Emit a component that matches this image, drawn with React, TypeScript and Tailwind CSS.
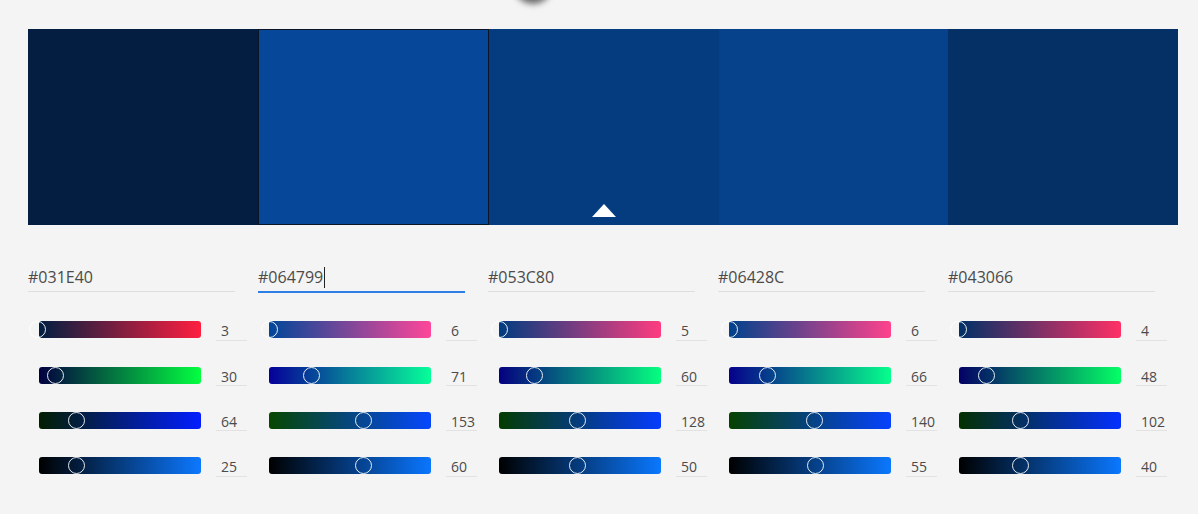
type Rgb = [number, number, number];

const swatches = ['#031E40', '#064799', '#053C80', '#06428C', '#043066'];

const hexToRgb = (hex: string): Rgb => {
  const n = parseInt(hex.slice(1), 16);
  return [(n >> 16) & 255, (n >> 8) & 255, n & 255];
};

const css = ([r, g, b]: Rgb) => `rgb(${Math.round(r)}, ${Math.round(g)}, ${Math.round(b)})`;

type SliderRow = {
  from: string;
  to: string;
  position: number; // 0..1
  label: number;
};

const buildRows = (hex: string): SliderRow[] => {
  const [r, g, b] = hexToRgb(hex);
  const max = Math.max(r, g, b);
  const scale = max ? 255 / max : 0;
  const brightness = Math.round((max / 255) * 100);

  return [
    { from: css([0, g, b]), to: css([255, g, b]), position: r / 255, label: r },
    { from: css([r, 0, b]), to: css([r, 255, b]), position: g / 255, label: g },
    { from: css([r, g, 0]), to: css([r, g, 255]), position: b / 255, label: b },
    {
      from: 'rgb(0, 0, 0)',
      to: css([r * scale, g * scale, b * scale]),
      position: brightness / 100,
      label: brightness,
    },
  ];
};

const Slider = ({ row }: { row: SliderRow }) => {
  return (
    <div className="flex h-[45.4px] items-center pl-[11px]">
      <div
        className="relative h-[17px] w-[162px] rounded-[3px]"
        style={{ backgroundImage: `linear-gradient(to right, ${row.from}, ${row.to})` }}
      >
        <div
          className="absolute top-0 h-[17px] w-[17px] rounded-full border border-white/90"
          style={{ left: row.position * 162 - 3 - 8.5 }}
        />
      </div>
      <div className="ml-[15px] flex h-[22px] w-[31px] items-center border-b border-[#e2e2e2] pl-[5px] pt-[3px] text-[14px] text-[#4b4b4b]">
        {row.label}
      </div>
    </div>
  );
};

const ColorColumn = ({ hex, active }: { hex: string; active: boolean }) => {
  const rows = buildRows(hex);

  return (
    <div className="flex flex-col">
      <div
        className={
          active
            ? 'flex h-[32px] w-[207px] items-center border-b-2 border-[#2d7fe6] pt-[2px] text-[16px] text-[#4b4b4b]'
            : 'flex h-[31px] w-[207px] items-center border-b border-[#dedede] pt-[2px] text-[16px] text-[#4b4b4b]'
        }
      >
        <span>{hex}</span>
        {active && <span className="ml-[1px] h-[21px] w-px bg-[#222]" />}
      </div>
      <div className={active ? 'mt-[14px]' : 'mt-[15px]'}>
        {rows.map((row, index) => (
          <Slider row={row} key={index} />
        ))}
      </div>
    </div>
  );
};

export default function App() {
  return (
    <div
      className="relative h-[514px] w-[1198px] overflow-hidden bg-[#f4f4f4] px-[28px] pt-[29px]"
      style={{ fontFamily: '"Open Sans", "Noto Sans", sans-serif' }}
    >
      {/* shadow of the wheel handle sitting above the viewport */}
      <div className="absolute left-[514px] top-[-36px] h-[40px] w-[38px] rounded-full bg-[#6a6a6a] blur-[3px]" />

      <div className="flex h-[196px] w-[1150px]">
        {swatches.map((hex, index) => (
          <div
            key={hex}
            className={
              index === 1
                ? 'relative flex-1 border border-[#0b1526]'
                : 'relative flex flex-1 items-end justify-center'
            }
            style={{ backgroundColor: hex }}
          >
            {index === 2 && (
              <div className="mb-[8px] h-0 w-0 border-x-[12.5px] border-b-[13px] border-x-transparent border-b-white" />
            )}
          </div>
        ))}
      </div>

      <div className="mt-[36px] grid w-[1150px] grid-cols-5">
        {swatches.map((hex, index) => (
          <ColorColumn hex={hex} active={index === 1} key={hex} />
        ))}
      </div>
    </div>
  );
}
